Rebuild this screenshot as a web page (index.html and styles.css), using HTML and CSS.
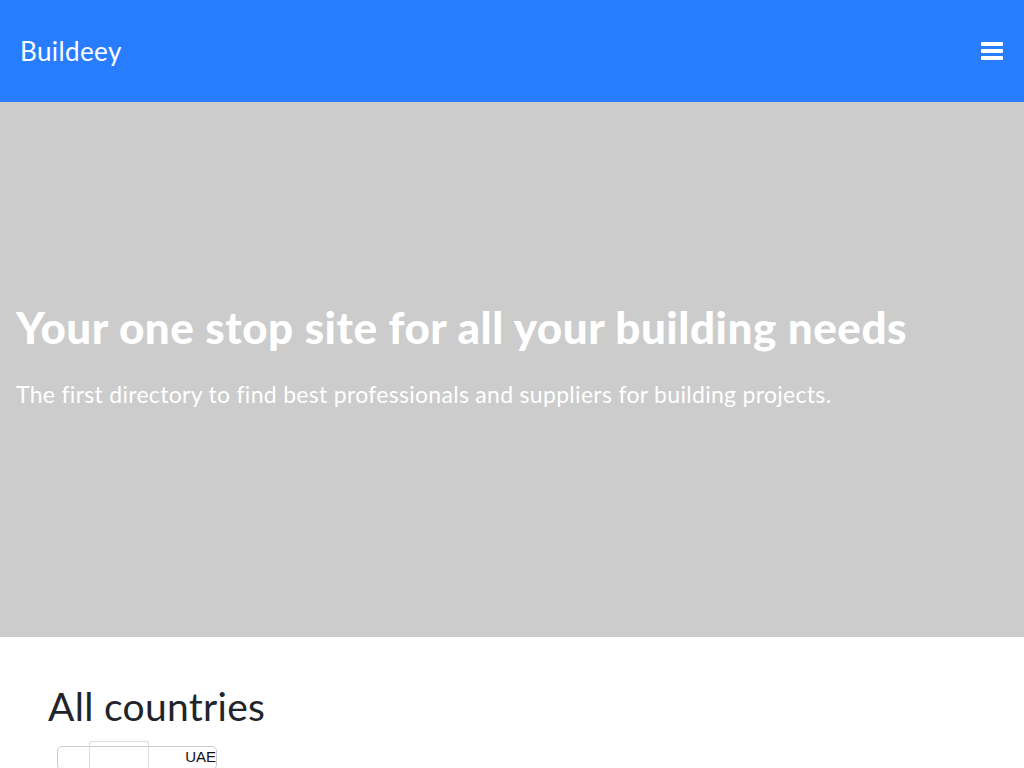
FILE: index.html
```html
<html>
  <head>
    <link rel="stylesheet" href="styles.css">
  </head>
  <body>
    <nav class="navbar">
      <a class="brand" href="#">Buildeey</a>
      <button class="menu-toggle" aria-label="Menu">
        <span></span><span></span><span></span>
      </button>
    </nav>

    <header class="hero">
      <h1>Your one stop site for all your building needs</h1>
      <p>The first directory to find best professionals and suppliers for building projects.</p>
    </header>

    <section class="countries">
      <h2>All countries</h2>
      <div class="country-slider">
        <div class="slide-frame"></div>
        <span class="country">UAE</span>
      </div>
    </section>
  </body>
</html>
```

FILE: styles.css
```css
body {
  margin: 0;
  font-family: Lato, "Open Sans", sans-serif;
  color: #212529;
  background: #fff;
  overflow: hidden;
}

.navbar {
  display: flex;
  align-items: center;
  justify-content: space-between;
  height: 102px;
  padding: 0 21px 0 20px;
  background: #287dff;
}
.brand {
  color: #fff;
  text-decoration: none;
  font-size: 26px;
  letter-spacing: 0.4px;
}
.menu-toggle {
  display: flex;
  flex-direction: column;
  gap: 3.5px;
  padding: 0;
  border: 0;
  background: none;
}
.menu-toggle span {
  display: block;
  width: 22px;
  height: 3.5px;
  background: #fff;
  border-radius: 1px;
}

.hero {
  box-sizing: border-box;
  height: 535px;
  padding: 199px 16px 0;
  background: #ccc;
  color: #fff;
}
.hero h1 {
  margin: 0 0 23px;
  font-size: 44px;
  font-weight: 900;
  line-height: 1.2;
  letter-spacing: 0.5px;
}
.hero p {
  margin: 0;
  font-size: 23px;
  line-height: 1.5;
  letter-spacing: 0.3px;
}

.countries {
  max-width: 930px;
  margin: 0 auto;
  padding: 46px 15px 0;
}
.countries h2 {
  margin: 0 0 16px;
  padding-left: 1px;
  font-size: 39px;
  font-weight: 400;
  line-height: 1.2;
  letter-spacing: 0.3px;
}
.country-slider {
  position: relative;
  display: flex;
  justify-content: flex-end;
  align-items: flex-start;
  width: 158px;
  height: 22px;
  margin-left: 10px;
  border: 1px solid #ccc;
  border-radius: 5px;
}
.slide-frame {
  position: absolute;
  top: -6px;
  left: 31px;
  width: 58px;
  height: 40px;
  border: 1px solid #ddd;
  border-bottom: 0;
  border-radius: 3px 3px 0 0;
}
.country {
  margin-top: 1px;
  font-family: "Liberation Sans", Arial, sans-serif;
  font-size: 15px;
  line-height: 17px;
  color: #111;
}
```
